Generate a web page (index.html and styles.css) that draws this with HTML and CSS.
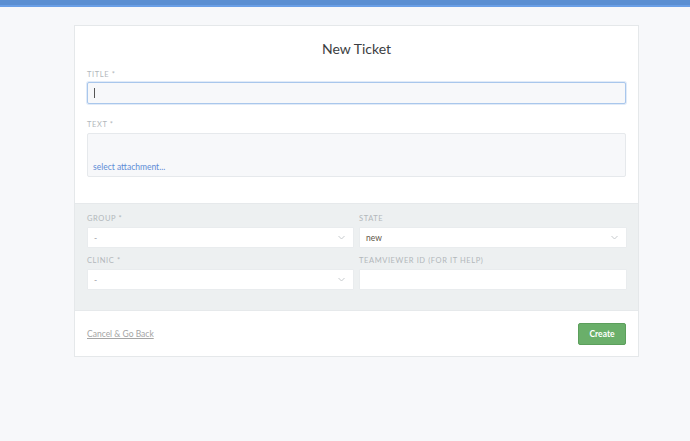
FILE: index.html
```html
<!DOCTYPE html>
<html>
<head>
<meta charset="utf-8">
<link rel="stylesheet" href="styles.css">
</head>
<body>
<div class="topbar"></div>
<main class="page">
  <div class="card">
    <h1 class="heading">New Ticket</h1>
    <div class="top-fields">
      <label class="label first">Title *</label>
      <div class="input focused"><span class="caret"></span></div>
      <label class="label text-label">Text *</label>
      <div class="textarea"><a class="attach">select attachment...</a></div>
    </div>
    <div class="gray">
      <div class="grid">
        <div class="field">
          <label class="label">Group *</label>
          <div class="select"><span class="val muted">-</span><svg class="chev" width="7" height="5" viewBox="0 0 7 5"><path d="M0.5 1 L3.5 4 L6.5 1" fill="none" stroke="#c6cacd" stroke-width="1"/></svg></div>
        </div>
        <div class="field">
          <label class="label">State</label>
          <div class="select"><span class="val">new</span><svg class="chev" width="7" height="5" viewBox="0 0 7 5"><path d="M0.5 1 L3.5 4 L6.5 1" fill="none" stroke="#c6cacd" stroke-width="1"/></svg></div>
        </div>
        <div class="field">
          <label class="label">Clinic *</label>
          <div class="select"><span class="val muted">-</span><svg class="chev" width="7" height="5" viewBox="0 0 7 5"><path d="M0.5 1 L3.5 4 L6.5 1" fill="none" stroke="#c6cacd" stroke-width="1"/></svg></div>
        </div>
        <div class="field">
          <label class="label">Teamviewer ID (for IT help)</label>
          <div class="select"></div>
        </div>
      </div>
    </div>
    <div class="footer">
      <a class="cancel">Cancel &amp; Go Back</a>
      <button class="create">Create</button>
    </div>
  </div>
</main>
</body>
</html>
```
FILE: styles.css
```css
html, body {
  margin: 0;
  padding: 0;
}
body {
  background: #f7f8fa;
  font-family: Lato, "Open Sans", sans-serif;
  color: #38393a;
  height: 441px;
  overflow: hidden;
}
.topbar {
  height: 7px;
  background: linear-gradient(#5b8fd2 0, #5b8fd2 5px, #6a9fe6 5px, #6a9fe6 7px);
}
.page {
  padding-top: 18px;
  padding-left: 74px;
}
.card {
  width: 563px;
  background: #fff;
  border: 1px solid #e5e8ea;
}
.heading {
  margin: 14px 0 0;
  font-size: 14px;
  line-height: 18px;
  font-weight: 400;
  text-align: center;
  color: #3b3e42;
}
.top-fields {
  padding: 0 12px 26px;
}
.label {
  display: block;
  font-size: 7.5px;
  line-height: 10px;
  letter-spacing: 0.6px;
  text-transform: uppercase;
  color: #b2b7bb;
}
.label.first {
  margin-top: 12px;
  margin-bottom: 2px;
}
.label.text-label {
  margin-top: 16px;
  margin-bottom: 3px;
}
.input {
  box-sizing: border-box;
  height: 22px;
  background: #f7f8fa;
  border: 1px solid #e4e7ea;
  border-radius: 2px;
  display: flex;
  align-items: center;
  padding-left: 6px;
}
.input.focused {
  border-color: #a9c7ec;
  box-shadow: 0 0 0 1px rgba(169, 199, 236, 0.35);
}
.caret {
  width: 1px;
  height: 10px;
  background: #555;
}
.textarea {
  box-sizing: border-box;
  height: 44px;
  background: #f7f8fa;
  border: 1px solid #e6e9ec;
  border-radius: 2px;
  display: flex;
  align-items: flex-end;
  padding: 0 5px 4px;
}
.attach {
  font-size: 8.5px;
  line-height: 10px;
  color: #5d8cd6;
}
.gray {
  background: #edf0f1;
  border-top: 1px solid #e6e9eb;
  padding: 10px 12px 20px;
}
.grid {
  display: grid;
  grid-template-columns: 267px 268px;
  column-gap: 5px;
  row-gap: 8px;
}
.field .label {
  margin-bottom: 3px;
}
.select {
  box-sizing: border-box;
  height: 21px;
  background: #fff;
  border: 1px solid #e9ecee;
  border-radius: 1px;
  display: flex;
  align-items: center;
  padding: 0 8px 0 6px;
}
.val {
  flex: 1;
  font-size: 8.5px;
  color: #5e5545;
}
.val.muted {
  color: #a0a4a8;
}
.chev {
  display: block;
}
.footer {
  border-top: 1px solid #e6e9eb;
  height: 45px;
  padding: 0 12px;
  display: flex;
  align-items: center;
  justify-content: space-between;
}
.cancel {
  font-size: 8.5px;
  color: #a5a5a5;
  text-decoration: underline;
  margin-top: 1px;
}
.create {
  box-sizing: border-box;
  width: 48px;
  height: 22px;
  background: #6aaf6a;
  border: 1px solid #5c9f5c;
  border-radius: 2px;
  color: #fff;
  font-family: Lato, "Open Sans", sans-serif;
  font-size: 8.5px;
  font-weight: 700;
  padding: 0;
  margin-top: 1px;
}
```
